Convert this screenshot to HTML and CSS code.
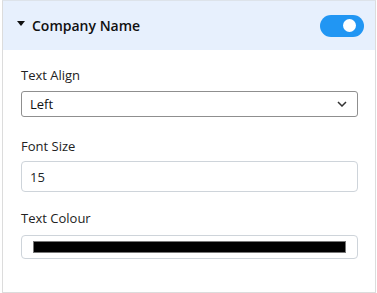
FILE: index.html
```html
<!DOCTYPE html>
<html>
<head>
<meta charset="utf-8">
<link rel="stylesheet" href="styles.css">
</head>
<body>
<div class="panel">
  <div class="header">
    <span class="caret"></span>
    <span class="title">Company Name</span>
    <span class="switch"><span class="knob"></span></span>
  </div>
  <div class="content">
    <div class="field f-align">
      <div class="label">Text Align</div>
      <div class="select">
        <span>Left</span>
        <svg class="chev" width="10" height="6" viewBox="0 0 10 6"><path d="M1 1l4 4 4-4" fill="none" stroke="#333" stroke-width="1.5"/></svg>
      </div>
    </div>
    <div class="field f-size">
      <div class="label">Font Size</div>
      <div class="input">15</div>
    </div>
    <div class="field f-colour">
      <div class="label">Text Colour</div>
      <div class="colour"><div class="swatch"></div></div>
    </div>
  </div>
</div>
</body>
</html>
```
FILE: styles.css
```css
* { box-sizing: border-box; }
html, body { margin: 0; padding: 0; background: #fff; }
body { font-family: "Open Sans", "Noto Sans", sans-serif; color: #212529; }
.panel {
  margin-left: 2px;
  width: 374px;
  height: 293px;
  border: 1px solid #dcdcdc;
  border-top-color: #dde3ea;
}
.header {
  height: 49px;
  background: #e7f0fd;
  display: flex;
  align-items: center;
  padding: 0 11px 0 14px;
}
.caret {
  width: 0; height: 0;
  border-left: 4.5px solid transparent;
  border-right: 4.5px solid transparent;
  border-top: 5px solid #111;
  margin-right: 7px;
  margin-top: -4px;
}
.title { font-weight: 600; font-size: 14px; color: #111; flex: 1; }
.switch {
  width: 44px; height: 22px; border-radius: 11px;
  background: #2196f3;
  display: flex; align-items: center; justify-content: flex-end;
  padding-right: 8px;
}
.knob { width: 13px; height: 13px; border-radius: 50%; background: #fff; }
.content { padding: 15px 17px 0 18px; }
.label { font-size: 13px; line-height: 20px; color: #222; }
.f-align .label { margin-bottom: 6px; }
.select {
  height: 26px;
  border: 1px solid #8f8f8f;
  border-radius: 3px;
  display: flex; align-items: center; justify-content: space-between;
  padding: 0 8px 0 8px;
  font-size: 13px; color: #111;
}
.chev { margin-right: 2px; }
.f-size { margin-top: 19px; }
.f-size .label { margin-bottom: 5px; }
.input {
  height: 31px;
  border: 1px solid #ced4da;
  border-radius: 4px;
  display: flex; align-items: center;
  padding: 0 8px;
  font-size: 13px; color: #212529;
}
.f-colour { margin-top: 16px; }
.f-colour .label { margin-bottom: 7px; }
.colour {
  height: 24px;
  border: 1px solid #ced4da;
  border-radius: 4px;
  padding: 5px 11px 5px 11px;
}
.swatch { height: 12px; background: #000; border: 1px solid #777; }
```
